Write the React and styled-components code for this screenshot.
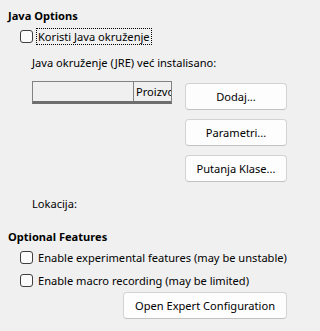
import React from "react";
import styled, { createGlobalStyle } from "styled-components";

const GlobalStyle = createGlobalStyle`
  html, body {
    margin: 0;
    padding: 0;
    background: #f0f0f0;
  }
  body {
    font-family: "Noto Sans", "Liberation Sans", sans-serif;
    font-size: 11.1px;
    color: #000;
  }
`;

const CheckIcon = () => (
  <svg width="13" height="13" viewBox="0 0 13 13">
    <rect x="0.5" y="0.5" width="12" height="12" rx="2.5" fill="#fbfbfb" stroke="#3f3f3f" />
  </svg>
);

const App = () => {
  return (
    <Page>
      <GlobalStyle />
      <SectionTitle>Java Options</SectionTitle>
      <Group>
        <CheckRow>
          <CheckIcon />
          <CheckLabel focused>Koristi Java okruženje</CheckLabel>
        </CheckRow>
        <SubPanel>
          <Caption>Java okruženje (JRE) već instalisano:</Caption>
          <JreRow>
            <JreTable>
              <HeaderCell />
              <HeaderCell last>Proizvođač</HeaderCell>
            </JreTable>
            <ButtonColumn>
              <Button>Dodaj...</Button>
              <Button>Parametri...</Button>
              <Button>Putanja Klase...</Button>
            </ButtonColumn>
          </JreRow>
          <Caption gap={14}>Lokacija:</Caption>
        </SubPanel>
      </Group>

      <SectionTitle gap={17}>Optional Features</SectionTitle>
      <Group>
        <CheckRow>
          <CheckIcon />
          <CheckLabel>Enable experimental features (may be unstable)</CheckLabel>
        </CheckRow>
        <CheckRow>
          <CheckIcon />
          <CheckLabel>Enable macro recording (may be limited)</CheckLabel>
        </CheckRow>
        <Footer>
          <Button wide>Open Expert Configuration</Button>
        </Footer>
      </Group>
    </Page>
  );
};

const Page = styled.div`
  width: 296px;
  height: 331px;
  box-sizing: border-box;
  padding: 8px 9px 0 8px;
  overflow: hidden;
`;

const SectionTitle = styled.div`
  font-weight: 700;
  line-height: 16px;
  margin-top: ${p => (p.gap ? p.gap : 0)}px;
`;

const Group = styled.div`
  padding-left: 12px;
  display: flex;
  flex-direction: column;
`;

const CheckRow = styled.label`
  display: flex;
  align-items: center;
  gap: 4px;
  height: 22px;
  margin-top: 1px;
  svg {
    flex: none;
  }
`;

const CheckLabel = styled.span`
  line-height: 15px;
  padding: 0 1px;
  outline: ${p => (p.focused ? "1px dotted #000" : "none")};
  white-space: nowrap;
`;

const SubPanel = styled.div`
  padding-left: 12px;
  display: flex;
  flex-direction: column;
`;

const Caption = styled.div`
  line-height: 16px;
  margin-top: ${p => (p.gap ? p.gap : 8)}px;
`;

const JreRow = styled.div`
  display: flex;
  align-items: flex-start;
  gap: 13px;
  margin-top: 10px;
`;

const JreTable = styled.div`
  width: 140px;
  height: 23px;
  box-sizing: border-box;
  border: 1px solid #828282;
  border-bottom: 3px solid #6e6e6e;
  display: flex;
  overflow: hidden;
`;

const HeaderCell = styled.div`
  flex: ${p => (p.last ? "none" : "0 0 98px")};
  border-right: ${p => (p.last ? "none" : "1px solid #828282")};
  padding-left: 2px;
  line-height: 19px;
  white-space: nowrap;
`;

const ButtonColumn = styled.div`
  display: flex;
  flex-direction: column;
  gap: 9px;
  margin-top: 2px;
`;

const Button = styled.button`
  font: inherit;
  color: #000;
  width: ${p => (p.wide ? "164px" : "102px")};
  height: 27px;
  background: #fdfdfd;
  border: 1px solid #d3d3d3;
  border-bottom-color: #c2c2c2;
  border-radius: 4px;
  padding: 0;
`;

const Footer = styled.div`
  display: flex;
  justify-content: flex-end;
  margin-top: 1px;
`;

export default App;
